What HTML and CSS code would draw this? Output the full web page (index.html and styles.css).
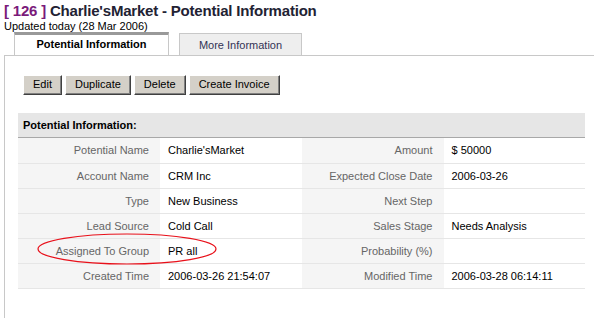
FILE: index.html
```html
<!DOCTYPE html>
<html lang="en">

<head>
    <meta charset="UTF-8">
    <title>Charlie'sMarket - Potential Information</title>
    <link rel="stylesheet" href="styles.css">
</head>

<body>
    <div class="page">
        <h1 class="title"><span class="record-id">[ 126 ]</span> Charlie'sMarket - Potential Information</h1>
        <p class="updated">Updated today (28 Mar 2006)</p>

        <div class="tabs">
            <div class="tab tab-active">Potential Information</div>
            <div class="tab tab-inactive">More Information</div>
        </div>

        <div class="content">
            <div class="buttons">
                <span class="button">Edit</span>
                <span class="button">Duplicate</span>
                <span class="button">Delete</span>
                <span class="button">Create Invoice</span>
            </div>

            <div class="detail">
                <div class="detail-header">Potential Information:</div>
                <table class="detail-table">
                    <tr>
                        <td class="label">Potential Name</td>
                        <td class="value">Charlie'sMarket</td>
                        <td class="label">Amount</td>
                        <td class="value">$ 50000</td>
                    </tr>
                    <tr>
                        <td class="label">Account Name</td>
                        <td class="value">CRM Inc</td>
                        <td class="label">Expected Close Date</td>
                        <td class="value">2006-03-26</td>
                    </tr>
                    <tr>
                        <td class="label">Type</td>
                        <td class="value">New Business</td>
                        <td class="label">Next Step</td>
                        <td class="value"></td>
                    </tr>
                    <tr>
                        <td class="label">Lead Source</td>
                        <td class="value">Cold Call</td>
                        <td class="label">Sales Stage</td>
                        <td class="value">Needs Analysis</td>
                    </tr>
                    <tr>
                        <td class="label">Assigned To Group</td>
                        <td class="value">PR all</td>
                        <td class="label">Probability (%)</td>
                        <td class="value"></td>
                    </tr>
                    <tr>
                        <td class="label">Created Time</td>
                        <td class="value">2006-03-26 21:54:07</td>
                        <td class="label">Modified Time</td>
                        <td class="value">2006-03-28 06:14:11</td>
                    </tr>
                </table>

                <!-- hand-drawn annotation around the group row -->
                <svg class="highlight" width="182" height="32" viewBox="0 0 182 32">
                    <ellipse cx="90" cy="16" rx="89" ry="15" fill="none" stroke="#e8101a" stroke-width="1.2" />
                </svg>
            </div>
        </div>
    </div>
</body>

</html>
```

FILE: styles.css
```css
* {
    margin: 0;
    padding: 0;
    box-sizing: border-box;
}

body {
    font-family: 'Liberation Sans', Arial, sans-serif;
    font-size: 11px;
    color: #000;
    background-color: #fff;
}

.page {
    width: 594px;
    height: 318px;
    overflow: hidden;
}

.title {
    font-size: 15px;
    font-weight: bold;
    letter-spacing: -0.2px;
    line-height: 18px;
    padding: 2px 0 0 4px;
    color: #222233;
}

.record-id {
    color: #7a1a7a;
}

.updated {
    line-height: 12px;
    padding-left: 4px;
}

.tabs {
    display: flex;
    align-items: flex-end;
    height: 24px;
    margin-left: 4px;
    padding-left: 10px;
    border-bottom: 1px solid #c8c8c8;
}

.tab {
    display: flex;
    align-items: center;
    justify-content: center;
    border: 1px solid #c8c8c8;
    border-bottom: none;
}

.tab-active {
    width: 155px;
    height: 23px;
    border-top: 3px solid #999;
    font-weight: bold;
    background-color: #fff;
    padding-bottom: 2px;
}

.tab-inactive {
    width: 123px;
    height: 22px;
    margin-left: 10px;
    background-color: #eeeeee;
    color: #333355;
}

.content {
    margin-left: 4px;
    height: 263px;
    border-left: 1px solid #c8c8c8;
    padding: 19px 8px 0 13px;
}

.buttons {
    display: flex;
    gap: 3px;
    margin-left: 5px;
}

.button {
    display: inline-block;
    height: 20px;
    line-height: 17px;
    padding: 0 9px;
    background-color: #d4d0c8;
    border: 1px solid;
    border-color: #fff #404040 #404040 #fff;
    box-shadow: inset -1px -1px 0 #808080;
}

.detail {
    position: relative;
    width: 567px;
    margin-top: 18px;
}

.detail-header {
    height: 25px;
    line-height: 24px;
    padding-left: 5px;
    font-weight: bold;
    background-color: #e6e6e6;
    border-bottom: 1px solid #a8a8a8;
}

.detail-table {
    width: 100%;
    border-collapse: collapse;
    table-layout: fixed;
}

.detail-table td {
    height: 25px;
    border-bottom: 1px solid #e6e6e6;
    white-space: nowrap;
}

.label {
    width: 142px;
    text-align: right;
    padding-right: 11px;
    color: #666;
    background-color: #f5f5f5;
}

.value {
    padding-left: 8px;
    color: #000;
    background-color: #fff;
}

.highlight {
    position: absolute;
    left: 19px;
    top: 120px;
}
```
